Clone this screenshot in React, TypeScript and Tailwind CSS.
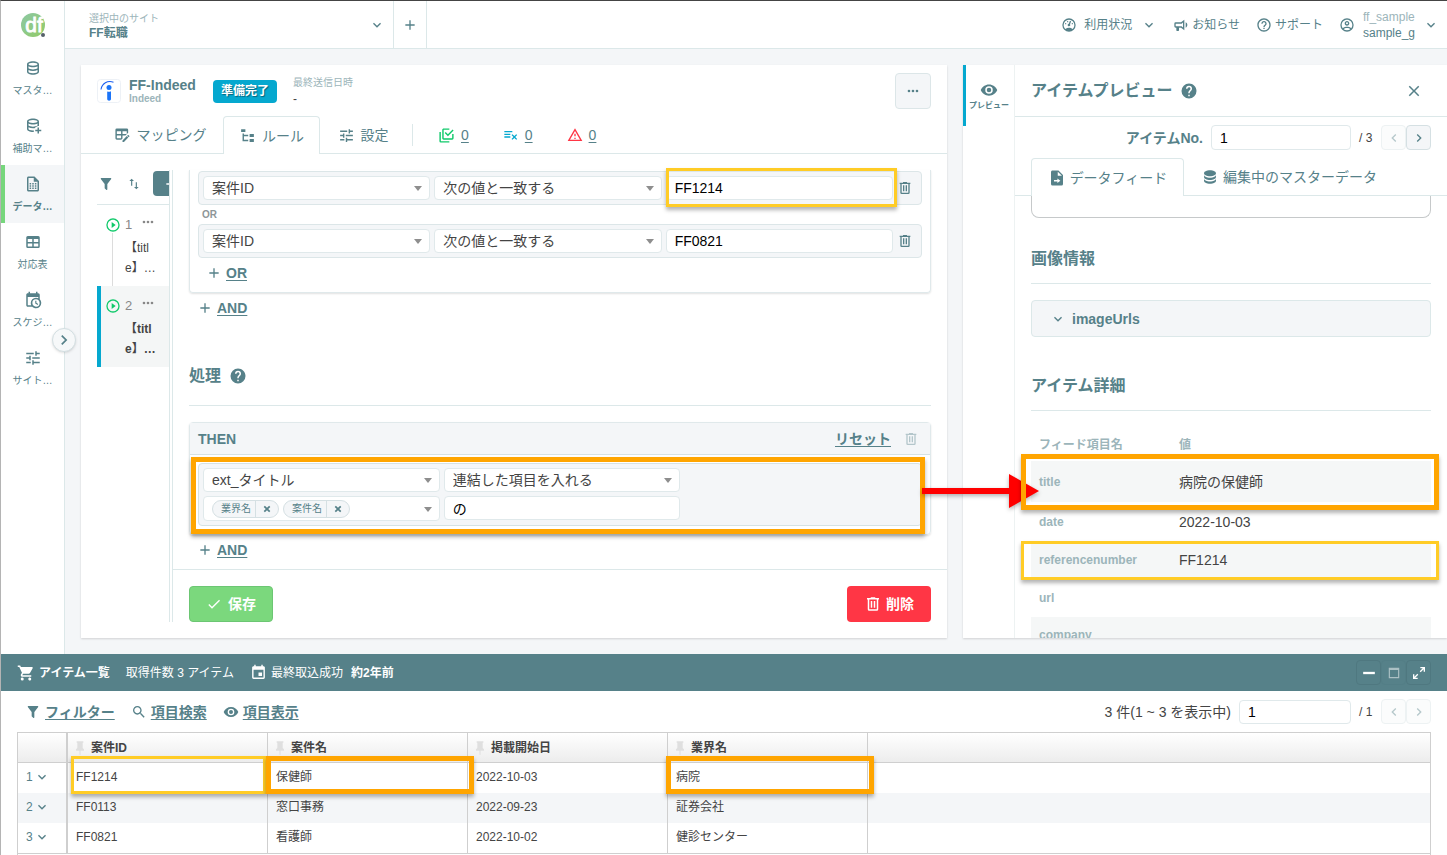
import { useState, type ReactNode } from 'react';

const paths = {
  database:
    'M12 3C7.58 3 4 4.79 4 7V17C4 19.21 7.59 21 12 21S20 19.21 20 17V7C20 4.79 16.42 3 12 3M18 17C18 17.5 15.87 19 12 19S6 17.5 6 17V14.77C7.61 15.55 9.72 16 12 16S16.39 15.55 18 14.77V17M18 12.45C16.7 13.4 14.42 14 12 14C9.58 14 7.3 13.4 6 12.45V9.64C7.47 10.47 9.61 11 12 11C14.39 11 16.53 10.47 18 9.64V12.45M12 9C8.13 9 6 7.5 6 7S8.13 5 12 5C15.87 5 18 6.5 18 7S15.87 9 12 9Z',
  databasePlus:
    'M12 2C7.58 2 4 3.79 4 6V16C4 18.21 7.59 20 12 20L13 19.97C13 19.3 13.1 18.6 13.3 17.94C12.9 18 12.5 18 12 18C8.13 18 6 16.5 6 16V13.77C7.61 14.55 9.72 15 12 15C12.7 15 13.4 14.95 14.1 14.87C14.9 13.9 15.9 13.1 17.1 12.6L18 12.3C18.6 12.1 19.3 12 20 12V6C20 3.79 16.42 2 12 2M18 11.45C16.7 12.4 14.42 13 12 13C9.58 13 7.3 12.4 6 11.45V8.64C7.47 9.47 9.61 10 12 10C14.39 10 16.53 9.47 18 8.64V11.45M12 8C8.13 8 6 6.5 6 6S8.13 4 12 4C15.87 4 18 5.5 18 6S15.87 8 12 8M18 14H20V17H23V19H20V22H18V19H15V17H18V14Z',
  fileTable:
    'M14 2H6C4.89 2 4 2.9 4 4V20C4 21.11 4.89 22 6 22H18C19.11 22 20 21.11 20 20V8L14 2M18 20H6V4H13V9H18V20M7.5 10.5H9.5V12.5H7.5ZM11 10.5H13V12.5H11ZM14.5 10.5H16.5V12.5H14.5ZM7.5 13.5H9.5V15.5H7.5ZM11 13.5H13V15.5H11ZM14.5 13.5H16.5V15.5H14.5ZM7.5 16.5H9.5V18.5H7.5ZM11 16.5H13V18.5H11ZM14.5 16.5H16.5V18.5H14.5Z',
  table:
    'M5,4H19A2,2 0 0,1 21,6V18A2,2 0 0,1 19,20H5A2,2 0 0,1 3,18V6A2,2 0 0,1 5,4M5,8V12H11V8H5M13,8V12H19V8H13M5,14V18H11V14H5M13,14V18H19V14H13Z',
  calendarClock:
    'M15 13H16.5V15.82L18.94 17.23L18.19 18.53L15 16.69V13M19 8H5V19H9.67C9.24 18.09 9 17.07 9 16A7 7 0 0 1 16 9C17.07 9 18.09 9.24 19 9.67V8M5 21C3.89 21 3 20.1 3 19V5C3 3.89 3.89 3 5 3H6V1H8V3H16V1H18V3H19A2 2 0 0 1 21 5V11.1C22.24 12.36 23 14.09 23 16A7 7 0 0 1 16 23C14.09 23 12.36 22.24 11.1 21H5M16 11.15A4.85 4.85 0 0 0 11.15 16C11.15 18.68 13.32 20.85 16 20.85A4.85 4.85 0 0 0 20.85 16C20.85 13.32 18.68 11.15 16 11.15Z',
  tune: 'M3 17v2h6v-2H3zM3 5v2h10V5H3zm10 16v-2h8v-2h-8v-2h-2v6h2zM7 9v2H3v2h4v2h2V9H7zm14 4v-2H11v2h10zm-6-4h2V7h4V5h-4V3h-2v6z',
  tableEdit:
    'M21.7,13.35L20.7,14.35L18.65,12.3L19.65,11.3C19.86,11.08 20.21,11.08 20.42,11.3L21.7,12.58C21.92,12.79 21.92,13.14 21.7,13.35M12,18.94L18.07,12.88L20.12,14.93L14.06,21H12V18.94M4,2H18A2,2 0 0,1 20,4V8.17L16.17,12H12V16.17L10.17,18H4A2,2 0 0,1 2,16V4A2,2 0 0,1 4,2M4,6V10H10V6H4M12,6V10H18V6H12M4,12V16H10V12H4Z',
  fileTree: 'M3,3H9V7H3V3M15,10H21V14H15V10M15,17H21V21H15V17M13,13H7V18H13V20H7L5,20V9H7V11H13V13Z',
  checks:
    'M20,16V10H22V16A2,2 0 0,1 20,18H8C6.89,18 6,17.1 6,16V4C6,2.89 6.89,2 8,2H16V4H8V16H20M10.91,7.08L14,10.17L20.59,3.58L22,5L14,13L9.5,8.5L10.91,7.08M16,20V22H4A2,2 0 0,1 2,20V7H4V20H16Z',
  listRemove:
    'M2,6V8H14V6H2M2,10V12H11V10H2M14.17,10.76L12.76,12.17L15.59,15L12.76,17.83L14.17,19.24L17,16.41L19.83,19.24L21.24,17.83L18.41,15L21.24,12.17L19.83,10.76L17,13.59L14.17,10.76M2,14V16H11V14H2Z',
  alert: 'M12,2L1,21H23M12,6L19.53,19H4.47M11,10V14H13V10M11,16V18H13V16',
  trash:
    'M9,3V4H4V6H5V19A2,2 0 0,0 7,21H17A2,2 0 0,0 19,19V6H20V4H15V3H9M7,6H17V19H7V6M9,8V17H11V8H9M13,8V17H15V8H13Z',
  filter:
    'M14,12V19.88C14.04,20.18 13.94,20.5 13.71,20.71C13.32,21.1 12.69,21.1 12.3,20.71L10.29,18.7C10.06,18.47 9.96,18.16 10,17.87V12H9.97L4.21,4.62C3.87,4.19 3.95,3.56 4.38,3.22C4.57,3.08 4.78,3 5,3V3H19V3C19.22,3 19.43,3.08 19.62,3.22C20.05,3.56 20.13,4.19 19.79,4.62L14.03,12H14Z',
  swap: 'M8,3L4,7H7V15H9V7H12M17,17V9H15V17H12L16,21L20,17H17Z',
  play: 'M12,20C7.59,20 4,16.41 4,12C4,7.59 7.59,4 12,4C16.41,4 20,7.59 20,12C20,16.41 16.41,20 12,20M12,2A10,10 0 0,0 2,12A10,10 0 0,0 12,22A10,10 0 0,0 22,12A10,10 0 0,0 12,2M10,16.5L16,12L10,7.5V16.5Z',
  help: 'M15.07,11.25L14.17,12.17C13.45,12.89 13,13.5 13,15H11V14.5C11,13.39 11.45,12.39 12.17,11.67L13.41,10.41C13.78,10.05 14,9.55 14,9C14,7.89 13.1,7 12,7A2,2 0 0,0 10,9H8A4,4 0 0,1 12,5A4,4 0 0,1 16,9C16,9.88 15.64,10.67 15.07,11.25M13,19H11V17H13M12,2A10,10 0 0,0 2,12A10,10 0 0,0 12,22A10,10 0 0,0 22,12C22,6.47 17.5,2 12,2Z',
  helpOutline:
    'M11 18h2v-2h-2v2zm1-16C6.48 2 2 6.48 2 12s4.48 10 10 10 10-4.48 10-10S17.52 2 12 2zm0 18c-4.41 0-8-3.59-8-8s3.59-8 8-8 8 3.59 8 8-3.59 8-8 8zm0-14c-2.21 0-4 1.79-4 4h2c0-1.1.9-2 2-2s2 .9 2 2c0 2-3 1.75-3 5h2c0-2.25 3-2.5 3-5 0-2.21-1.79-4-4-4z',
  eye: 'M12,9A3,3 0 0,0 9,12A3,3 0 0,0 12,15A3,3 0 0,0 15,12A3,3 0 0,0 12,9M12,17A5,5 0 0,1 7,12A5,5 0 0,1 12,7A5,5 0 0,1 17,12A5,5 0 0,1 12,17M12,4.5C7,4.5 2.73,7.61 1,12C2.73,16.39 7,19.5 12,19.5C17,19.5 21.27,16.39 23,12C21.27,7.61 17,4.5 12,4.5Z',
  account:
    'M12,2A10,10 0 0,0 2,12A10,10 0 0,0 12,22A10,10 0 0,0 22,12A10,10 0 0,0 12,2M7.07,18.28C7.5,17.38 10.12,16.5 12,16.5C13.88,16.5 16.5,17.38 16.93,18.28C15.57,19.36 13.86,20 12,20C10.14,20 8.43,19.36 7.07,18.28M18.36,16.83C16.93,15.09 13.46,14.5 12,14.5C10.54,14.5 7.07,15.09 5.64,16.83C4.62,15.5 4,13.82 4,12C4,7.59 7.59,4 12,4C16.41,4 20,7.59 20,12C20,13.82 19.38,15.5 18.36,16.83M12,6C10.06,6 8.5,7.56 8.5,9.5C8.5,11.44 10.06,13 12,13C13.94,13 15.5,11.44 15.5,9.5C15.5,7.56 13.94,6 12,6M12,11A1.5,1.5 0 0,1 10.5,9.5A1.5,1.5 0 0,1 12,8A1.5,1.5 0 0,1 13.5,9.5A1.5,1.5 0 0,1 12,11Z',
  gauge:
    'M12,2A10,10 0 0,0 2,12A10,10 0 0,0 12,22A10,10 0 0,0 22,12A10,10 0 0,0 12,2M12,4A8,8 0 0,1 20,12C20,14.4 19,16.5 17.3,18C15.9,16.7 14,16 12,16C10,16 8.2,16.7 6.7,18C5,16.5 4,14.4 4,12A8,8 0 0,1 12,4M14,5.89C13.62,5.9 13.26,6.15 13.1,6.54L11.81,9.77L11.71,10C11,10.13 10.41,10.6 10.14,11.26C9.73,12.29 10.23,13.45 11.26,13.86C12.29,14.27 13.45,13.77 13.86,12.74C14.12,12.08 14,11.32 13.57,10.76L13.67,10.5L14.96,7.29L14.97,7.26C15.17,6.75 14.92,6.17 14.41,5.96C14.28,5.91 14.15,5.89 14,5.89M10,6A1,1 0 0,0 9,7A1,1 0 0,0 10,8A1,1 0 0,0 11,7A1,1 0 0,0 10,6M7,9A1,1 0 0,0 6,10A1,1 0 0,0 7,11A1,1 0 0,0 8,10A1,1 0 0,0 7,9M17,9A1,1 0 0,0 16,10A1,1 0 0,0 17,11A1,1 0 0,0 18,10A1,1 0 0,0 17,9Z',
  bullhorn:
    'M12,8H4A2,2 0 0,0 2,10V14A2,2 0 0,0 4,16H5V20A1,1 0 0,0 6,21H8A1,1 0 0,0 9,20V16H12L17,20V4L12,8M15,15.6L13,14H4V10H13L15,8.4V15.6M21.5,12C21.5,13.71 20.54,15.26 19,16V8C20.53,8.75 21.5,10.3 21.5,12Z',
  fileArrow:
    'M6,2C4.89,2 4,2.89 4,4V20A2,2 0 0,0 6,22H18A2,2 0 0,0 20,20V8L14,2H6M13,3.5L18.5,9H13V3.5M8,14.5H12.5V12.5L16.5,15.5L12.5,18.5V16.5H8Z',
  databaseSolid:
    'M12,3C7.58,3 4,4.79 4,7C4,9.21 7.58,11 12,11C16.42,11 20,9.21 20,7C20,4.79 16.42,3 12,3M4,9V12C4,14.21 7.58,16 12,16C16.42,16 20,14.21 20,12V9C20,11.21 16.42,13 12,13C7.58,13 4,11.21 4,9M4,14V17C4,19.21 7.58,21 12,21C16.42,21 20,19.21 20,17V14C20,16.21 16.42,18 12,18C7.58,18 4,16.21 4,14Z',
  cart: 'M17,18A2,2 0 0,1 19,20A2,2 0 0,1 17,22C15.89,22 15,21.1 15,20C15,18.89 15.89,18 17,18M1,2H4.27L5.21,4H20A1,1 0 0,1 21,5C21,5.17 20.95,5.34 20.88,5.5L17.3,11.97C16.96,12.58 16.3,13 15.55,13H8.1L7.2,14.63L7.17,14.75A0.25,0.25 0 0,0 7.42,15H19V17H7C5.89,17 5,16.1 5,15C5,14.65 5.09,14.32 5.24,14.04L6.6,11.59L3,4H1V2M7,18A2,2 0 0,1 9,20A2,2 0 0,1 7,22C5.89,22 5,21.1 5,20C5,18.89 5.89,18 7,18Z',
  calendar:
    'M19,19H5V8H19M16,1V3H8V1H6V3H5C3.89,3 3,3.89 3,5V19A2,2 0 0,0 5,21H19A2,2 0 0,0 21,19V5C21,3.89 20.1,3 19,3H18V1M17,12H12V17H17V12Z',
  search:
    'M15.5 14h-.79l-.28-.27C15.41 12.59 16 11.11 16 9.5 16 5.91 13.09 3 9.5 3S3 5.91 3 9.5 5.91 16 9.5 16c1.61 0 3.09-.59 4.23-1.57l.27.28v.79l5 4.99L20.49 19l-4.99-5zm-6 0C7.01 14 5 11.99 5 9.5S7.01 5 9.5 5 14 7.01 14 9.5 11.99 14 9.5 14z',
  pin: 'M16,12V4H17V2H7V4H8V12L6,14V16H11.2V22H12.8V16H18V14L16,12Z',
  expand:
    'M10,21V19H6.41L10.91,14.5L9.5,13.09L5,17.59V14H3V21H10M14.5,10.91L19,6.41V10H21V3H14V5H17.59L13.09,9.5L14.5,10.91Z',
  maximize: 'M3,3H21V21H3V3M5,7V19H19V7H5Z',
  minimize: 'M2,10H22V14H2Z',
  chevronDown: 'M7.41,8.58L12,13.17L16.59,8.58L18,10L12,16L6,10L7.41,8.58Z',
  chevronRight: 'M8.59,16.58L13.17,12L8.59,7.41L10,6L16,12L10,18L8.59,16.58Z',
  chevronLeft: 'M15.41,16.58L10.83,12L15.41,7.41L14,6L8,12L14,18L15.41,16.58Z',
  plus: 'M19,13H13V19H11V13H5V11H11V5H13V11H19V13Z',
  check: 'M21,7L9,19L3.5,13.5L4.91,12.09L9,16.17L19.59,5.59L21,7Z',
  close: 'M19,6.41L17.59,5L12,10.59L6.41,5L5,6.41L10.59,12L5,17.59L6.41,19L12,13.41L17.59,19L19,17.59L13.41,12L19,6.41Z',
  closeBold:
    'M20 6.91L17.09 4L12 9.09L6.91 4L4 6.91L9.09 12L4 17.09L6.91 20L12 14.91L17.09 20L20 17.09L14.91 12L20 6.91Z',
  dots: 'M16,12A2,2 0 0,1 18,10A2,2 0 0,1 20,12A2,2 0 0,1 18,14A2,2 0 0,1 16,12M10,12A2,2 0 0,1 12,10A2,2 0 0,1 14,12A2,2 0 0,1 12,14A2,2 0 0,1 10,12M4,12A2,2 0 0,1 6,10A2,2 0 0,1 8,12A2,2 0 0,1 6,14A2,2 0 0,1 4,12Z',
  caret: 'M4,8H20L12,18Z',
};

type IconName = keyof typeof paths;

function Icon({ name, className = 'size-4' }: { name: IconName; className?: string }) {
  return (
    <svg viewBox="0 0 24 24" fill="currentColor" fillRule="evenodd" aria-hidden="true" className={`shrink-0 ${className}`}>
      <path d={paths[name]} />
    </svg>
  );
}

/* Callout frame laid over the element it is placed in. */
function Callout({ className }: { className: string }) {
  return (
    <div
      className={`pointer-events-none absolute z-10 shadow-[0_3px_4px_rgba(0,0,0,0.3)] ${className}`}
    />
  );
}

function Select({ label, value }: { label: string; value: string }) {
  return (
    <div className="relative min-w-0 flex-1">
      <select
        aria-label={label}
        className="block h-6 w-full appearance-none rounded border border-[#e0e9eb] bg-white pl-2 pr-7 text-sm leading-5 text-[#444]"
      >
        <option>{value}</option>
      </select>
      <Icon name="caret" className="pointer-events-none absolute right-1.5 top-1.5 size-3 text-[#8e8e8e]" />
    </div>
  );
}

function TextInput({ label, value, className = 'w-full' }: { label: string; value: string; className?: string }) {
  return (
    <input
      aria-label={label}
      defaultValue={value}
      className={`block h-6 rounded border border-[#e0e9eb] bg-white px-2 text-sm leading-5 text-black ${className}`}
    />
  );
}

const navItems: { icon: IconName; label: string; active?: boolean }[] = [
  { icon: 'database', label: 'マスタ…' },
  { icon: 'databasePlus', label: '補助マ…' },
  { icon: 'fileTable', label: 'データ…', active: true },
  { icon: 'table', label: '対応表' },
  { icon: 'calendarClock', label: 'スケジ…' },
  { icon: 'tune', label: 'サイト…' },
];

function Sidebar() {
  return (
    <aside className="relative w-16 shrink-0 border-r border-[#dce8e9] bg-white">
      <div className="flex h-12 items-center justify-center">
        <svg viewBox="0 0 26 26" className="size-[26px]" role="img" aria-label="df">
          <defs>
            <linearGradient id="logo" x1="0" y1="0" x2="1" y2="1">
              <stop offset="0" stopColor="#8cc8a4" />
              <stop offset="1" stopColor="#92cb66" />
            </linearGradient>
          </defs>
          <circle cx="13" cy="13" r="12" fill="url(#logo)" />
          <text
            x="14"
            y="20"
            textAnchor="middle"
            fontFamily="Liberation Sans, sans-serif"
            fontSize="21"
            fill="#fff"
            stroke="#fff"
            strokeWidth="0.8"
          >
            df
          </text>
          <circle cx="23" cy="23" r="2" fill="#55606a" />
        </svg>
      </div>
      <nav>
        {navItems.map((item) => (
          <a
            key={item.label}
            href="#"
            className={`flex h-[58px] flex-col items-center gap-1 border-l-4 pr-1 pt-2.5 text-[10px] leading-5 ${
              item.active ? 'border-[#76d67c] bg-[#f4f6f8] font-bold' : 'border-transparent'
            }`}
          >
            <Icon name={item.icon} className="size-[18px]" />
            {item.label}
          </a>
        ))}
      </nav>
      <button
        aria-label="メニューを開く"
        className="absolute -right-3 top-[327px] z-10 flex size-6 items-center justify-center rounded-full border border-[#d3dfe2] bg-[#f6f8f9] shadow-sm"
      >
        <Icon name="chevronRight" className="size-5" />
      </button>
    </aside>
  );
}

function Header() {
  return (
    <header className="flex h-12 shrink-0 items-stretch justify-between border-b border-[#dce8e9] bg-white">
      <div className="flex">
        <button className="flex w-[329px] items-center justify-between border-r border-[#dce8e9] pl-6 pr-2 text-left">
          <span className="flex flex-col pt-0.5">
            <span className="text-[10px] leading-[14px] text-[#9cb5ba]">選択中のサイト</span>
            <span className="text-xs leading-[14px] font-bold">FF転職</span>
          </span>
          <Icon name="chevronDown" />
        </button>
        <button aria-label="サイトを追加" className="flex w-[33px] items-center justify-center border-r border-[#dce8e9]">
          <Icon name="plus" />
        </button>
      </div>
      <div className="flex items-center pr-2 text-xs">
        <button className="flex items-center gap-[7px]">
          <Icon name="gauge" />
          利用状況
          <Icon name="chevronDown" className="ml-0.5 size-4" />
        </button>
        <button className="ml-4 flex items-center gap-[3px]">
          <Icon name="bullhorn" />
          お知らせ
        </button>
        <button className="ml-4 flex items-center gap-[3px]">
          <Icon name="helpOutline" />
          サポート
        </button>
        <button className="ml-4 flex items-center gap-2 text-left">
          <Icon name="account" />
          <span className="flex flex-col leading-4">
            <span className="text-[#9cb5ba]">ff_sample</span>
            <span>sample_g</span>
          </span>
          <Icon name="chevronDown" className="size-4" />
        </button>
      </div>
    </header>
  );
}

function IndeedMark() {
  return (
    <svg viewBox="0 0 24 24" className="size-6 shrink-0" role="img" aria-label="Indeed">
      <rect x="0.5" y="0.5" width="23" height="23" rx="3" fill="#fff" stroke="#edf1f6" />
      <circle cx="12" cy="8.6" r="2.5" fill="#1b74f8" />
      <path d="M10.200 12.400c1.300.6 2.500.6 3.800-.2V20c0 2.200-3.800 2.200-3.800 0z" fill="#1b74f8" />
      <path d="M4 10.500C5 4.200 10.500 1.200 16.500 3.200" fill="none" stroke="#1b5ff0" strokeWidth="1.100" />
    </svg>
  );
}

function FeedHeader() {
  const tab = 'flex h-[38px] items-center justify-center gap-1.5 text-sm';
  return (
    <div className="border-b border-[#dce8e9]">
      <div className="flex items-center px-4 pt-2">
        <IndeedMark />
        <div className="ml-2 flex flex-col">
          <span className="text-sm leading-4 font-bold">FF-Indeed</span>
          <span className="text-[10px] leading-3 font-bold text-[#9cb5ba]">Indeed</span>
        </div>
        <span className="ml-[17px] flex h-[23px] items-center rounded-sm bg-[#05a8cf] px-2 text-xs font-bold text-white [text-shadow:1px_1px_1px_rgba(0,0,0,0.4)]">
          準備完了
        </span>
        <div className="ml-4 flex flex-col">
          <span className="text-[10px] leading-4 text-[#9cb5ba]">最終送信日時</span>
          <span className="text-xs leading-4 text-[#444]">-</span>
        </div>
        <button
          aria-label="その他"
          className="ml-auto flex size-9 items-center justify-center rounded border border-[#dce6e8] bg-[#f4f6f8]"
        >
          <Icon name="dots" />
        </button>
      </div>
      <div role="tablist" className="mt-[7px] -mb-px flex items-center pl-4">
        <button role="tab" aria-selected="false" className={`${tab} w-[126px]`}>
          <Icon name="tableEdit" className="size-[17px]" />
          マッピング
        </button>
        <button
          role="tab"
          aria-selected="true"
          className={`${tab} w-[97px] rounded-t border border-b-0 border-[#dce8e9] bg-white`}
        >
          <Icon name="fileTree" className="size-[17px]" />
          ルール
        </button>
        <button role="tab" aria-selected="false" className={`${tab} w-[86px]`}>
          <Icon name="tune" className="size-[17px]" />
          設定
        </button>
        <div className="ml-1.5 flex h-[22px] items-center gap-[34px] border-l border-[#dce8e9] pl-[25px] text-sm">
          <a href="#" className="flex items-center gap-1.5">
            <Icon name="checks" className="size-[17px] text-[#0fc96a]" />
            <span className="underline underline-offset-2">0</span>
          </a>
          <a href="#" className="flex items-center gap-1.5">
            <Icon name="listRemove" className="size-[16px] text-[#05a8cf]" />
            <span className="underline underline-offset-2">0</span>
          </a>
          <a href="#" className="flex items-center gap-1.5">
            <Icon name="alert" className="size-4 text-[#ff3645]" />
            <span className="underline underline-offset-2">0</span>
          </a>
        </div>
      </div>
    </div>
  );
}

function RuleList() {
  return (
    <div className="w-[73px] shrink-0 overflow-hidden border-r border-[#dce8e9]">
      <div className="flex h-[35px] items-start border-b border-[#dce8e9] pt-px">
        <button aria-label="絞り込み" className="flex h-[25px] w-[18px] shrink-0 items-center justify-center">
          <Icon name="filter" />
        </button>
        <button aria-label="並べ替え" className="ml-3 flex h-[25px] w-[14px] shrink-0 items-center justify-center">
          <Icon name="swap" className="size-3.5" />
        </button>
        <button
          aria-label="追加"
          className="ml-3 flex h-[25px] w-9 shrink-0 items-center justify-center rounded-l bg-[#568189] text-white"
        >
          <Icon name="plus" className="size-4" />
        </button>
      </div>
      {['1', '2'].map((n) => {
        const active = n === '2';
        return (
          <a
            key={n}
            href="#"
            className={`relative flex h-[81px] border-l-4 pl-1 pt-[11px] text-xs text-[#444] ${
              active ? 'border-[#05a8cf] bg-[#f4f6f6]' : 'border-transparent'
            }`}
          >
            {!active && <span className="absolute left-[11px] top-7 h-16 w-px bg-[#dcdcdc]" />}
            <span className="relative z-10 pt-px text-[#0fc96a]">
              <Icon name="play" className="size-4" />
            </span>
            <span className="ml-1">
              <span className="flex items-start justify-between text-[#888]">
                <span className="text-[13px] leading-[18px]">{n}</span>
                <Icon name="dots" className="-mt-0.5 ml-2 size-4" />
              </span>
              <span className={`block pt-1 leading-5 whitespace-nowrap ${active ? 'font-bold' : ''}`}>
                【titl
                <br />
                e】…
              </span>
            </span>
          </a>
        );
      })}
    </div>
  );
}

function Condition({ value, highlighted }: { value: string; highlighted?: boolean }) {
  return (
    <div className="flex items-center rounded border border-[#dce6e8] bg-[#f4f6f8] p-1">
      <div className="flex flex-1 gap-1">
        <Select label="項目" value="案件ID" />
        <Select label="条件" value="次の値と一致する" />
        <div className="relative flex-1">
          <TextInput label="値" value={value} />
          {highlighted && <Callout className="left-0 -right-1 -top-2 -bottom-[7px] border-3 border-[#ffcc26]" />}
        </div>
      </div>
      <button aria-label="削除" className="flex w-6 justify-center">
        <Icon name="trash" />
      </button>
    </div>
  );
}

function AddLink({ children, className = '' }: { children: ReactNode; className?: string }) {
  return (
    <a href="#" className={`flex h-[30px] w-fit items-center gap-1 text-sm font-bold ${className}`}>
      <Icon name="plus" className="size-4" />
      <span className="underline underline-offset-2">{children}</span>
    </a>
  );
}

function Tag({ children }: { children: string }) {
  return (
    <span className="flex h-[18px] items-stretch rounded-full border border-[#d5e0e3] bg-[#f4f6f8] text-[10px] leading-4">
      <span className="pl-2 pr-1">{children}</span>
      <button aria-label={`${children}を外す`} className="flex w-[23px] items-center justify-center border-l border-[#d5e0e3]">
        <Icon name="closeBold" className="size-2.5" />
      </button>
    </span>
  );
}

function Arrow() {
  return (
    <svg
      viewBox="0 0 117 40"
      aria-hidden="true"
      className="pointer-events-none absolute left-full top-4 z-20 -ml-0.5 h-10 w-[117px] drop-shadow-[0_2px_2px_rgba(0,0,0,0.3)]"
    >
      <path d="M0 17H87V3L117 20L87 37V23H0Z" fill="#f00" />
    </svg>
  );
}

function RuleEditor() {
  return (
    <div className="ml-0.5 flex min-w-0 flex-1 flex-col border-l border-[#dce8e9]">
      <div className="px-4">
        <div className="rounded-b border border-t-0 border-[#e0e9eb] px-2 pb-1 pt-px shadow-[0_1px_2px_rgba(0,0,0,0.12)]">
          <Condition value="FF1214" highlighted />
          <div className="pl-1 text-[10px] leading-[19px] font-bold text-[#8e9698]">OR</div>
          <Condition value="FF0821" />
          <AddLink className="pl-2">OR</AddLink>
        </div>
        <AddLink className="pl-2">AND</AddLink>
        <h2 className="mt-10 flex items-center gap-2 border-b border-[#dce8e9] pb-[17px] text-base leading-[25px] font-bold">
          処理
          <Icon name="help" className="size-[18px]" />
        </h2>
        <div className="mt-4 rounded border border-[#e0e9eb] shadow-[0_1px_2px_rgba(0,0,0,0.12)]">
          <div className="flex h-8 items-center border-b border-[#d5e2e4] bg-[#f4f6f8] pl-2 pr-[11px] text-sm font-bold">
            THEN
            <button className="ml-auto underline underline-offset-2">リセット</button>
            <button aria-label="削除" className="ml-3 opacity-40">
              <Icon name="trash" />
            </button>
          </div>
          <div className="relative p-2">
            <div className="grid grid-cols-3 gap-1 rounded border border-[#d5e2e4] bg-[#f4f6f8] py-1 pl-1">
              <Select label="出力項目" value="ext_タイトル" />
              <Select label="処理内容" value="連結した項目を入れる" />
              <span />
              <div className="flex h-[25px] items-center gap-1 rounded border border-[#e0e9eb] bg-white pl-2 pr-[5px]">
                <Tag>業界名</Tag>
                <Tag>案件名</Tag>
                <Icon name="caret" className="ml-auto size-3 text-[#8e8e8e]" />
              </div>
              <TextInput label="連結文字" value="の" />
            </div>
            <Callout className="left-px right-[5px] top-0.5 bottom-0 border-5 border-[#ffa500]" />
            <div className="absolute right-1.5 top-0">
              <Arrow />
            </div>
          </div>
        </div>
        <AddLink className="pl-2">AND</AddLink>
      </div>
      <div className="mt-auto flex justify-between border-t border-[#dce8e9] px-4 pt-4 text-sm font-bold text-white [text-shadow:1px_1px_1px_rgba(0,0,0,0.35)]">
        <button className="flex h-9 w-[84px] items-center justify-center gap-1.5 rounded border border-[#6cc673] bg-[#7bd87d]">
          <Icon name="check" />
          保存
        </button>
        <button className="flex h-9 w-[84px] items-center justify-center gap-1 rounded bg-[#ff3645]">
          <Icon name="trash" className="size-[18px]" />
          削除
        </button>
      </div>
    </div>
  );
}

const pagerButton = 'flex size-[25px] items-center justify-center rounded border';

function Pager({ nextEnabled }: { nextEnabled?: boolean }) {
  return (
    <div className="flex">
      <button aria-label="前へ" disabled className={`${pagerButton} border-[#edf2f3] bg-[#fbfcfc] text-[#b5c8cb]`}>
        <Icon name="chevronLeft" />
      </button>
      <button
        aria-label="次へ"
        disabled={!nextEnabled}
        className={`${pagerButton} ${
          nextEnabled ? 'border-[#d5e0e3] bg-[#f4f6f8]' : 'border-[#edf2f3] bg-[#fbfcfc] text-[#b5c8cb]'
        }`}
      >
        <Icon name="chevronRight" />
      </button>
    </div>
  );
}

const details: { name: string; value: string; frame?: string; height: string }[] = [
  {
    name: 'title',
    value: '病院の保健師',
    frame: '-left-2.5 -right-2 -top-[7px] -bottom-2 border-5 border-[#ffa500]',
    height: 'h-[41px]',
  },
  { name: 'date', value: '2022-10-03', height: 'h-[39px]' },
  {
    name: 'referencenumber',
    value: 'FF1214',
    frame: '-left-2.5 -right-2 top-0 -bottom-px border-3 border-[#ffcc26]',
    height: 'h-[38px]',
  },
  { name: 'url', value: '', height: 'h-[38px]' },
  { name: 'company', value: '', height: 'h-[36px]' },
];

function Preview() {
  return (
    <section className="flex min-w-0 flex-1 overflow-hidden bg-white shadow-[0_1px_2px_rgba(0,0,0,0.15)]">
      <div className="w-[52px] shrink-0 border-r border-[#edf2f2]">
        <button className="flex h-[61px] w-full flex-col items-center justify-center border-l-3 border-[#05a8cf] pt-0.5 pr-0.5 text-[8px] leading-[14px] font-bold">
          <Icon name="eye" className="size-[18px]" />
          プレビュー
        </button>
      </div>
      <div className="min-w-0 flex-1">
        <div className="flex h-[52px] items-center gap-2 border-b border-[#dce8e9] px-4">
          <h2 className="text-base font-bold">アイテムプレビュー</h2>
          <Icon name="help" className="size-[18px]" />
          <button aria-label="閉じる" className="ml-auto mr-2">
            <Icon name="close" className="size-[18px]" />
          </button>
        </div>
        <div className="flex h-[41px] items-center justify-end px-4">
          <label htmlFor="item-no" className="text-sm font-bold">
            アイテムNo.
          </label>
          <input
            id="item-no"
            defaultValue="1"
            className="ml-2 h-[25px] w-[140px] rounded border border-[#e0e9eb] px-2 text-sm text-black"
          />
          <span className="mx-2 w-3.5 text-xs whitespace-nowrap text-[#444]">/ 3</span>
          <Pager nextEnabled />
        </div>
        <div role="tablist" className="flex border-b border-[#dce8e9] pl-4 text-sm">
          <button
            role="tab"
            aria-selected="true"
            className="-mb-px flex h-[38px] w-[153px] items-center justify-center gap-1 rounded-t border border-b-0 border-[#dce8e9] bg-white"
          >
            <Icon name="fileArrow" className="size-[18px]" />
            データフィード
          </button>
          <button role="tab" aria-selected="false" className="flex h-[37px] items-center gap-1 pl-[17px]">
            <Icon name="databaseSolid" className="size-[18px]" />
            編集中のマスターデータ
          </button>
        </div>
        <div className="px-4">
          <div className="h-[22px] rounded-b-lg border border-t-0 border-[#c6c9ca]" />
          <h3 className="mt-[29px] border-b border-[#dce8e9] pb-3 text-base leading-6 font-bold">画像情報</h3>
          <button className="mt-4 flex h-[37px] w-full items-center gap-1 rounded border border-[#dce8e9] bg-[#f4f6f8] px-4 text-sm font-bold">
            <Icon name="chevronDown" className="mx-0.5 size-4" />
            imageUrls
          </button>
          <h3 className="mt-[37px] border-b border-[#dce8e9] pb-3 text-base leading-6 font-bold">アイテム詳細</h3>
          <table className="mt-[18px] w-full table-fixed text-left">
            <thead>
              <tr className="h-8 text-xs text-[#9cb5ba]">
                <th className="w-[140px] pl-2">フィード項目名</th>
                <th className="pl-2">値</th>
              </tr>
            </thead>
            <tbody>
              {details.map((row) => (
                <tr key={row.name} className={`relative odd:bg-[#f5f7f7] ${row.height}`}>
                  <th className="pl-2 text-xs text-[#9cb5ba]">
                    {row.name}
                    {row.frame && <Callout className={row.frame} />}
                  </th>
                  <td className="pl-2 text-sm text-[#444]">{row.value}</td>
                </tr>
              ))}
            </tbody>
          </table>
        </div>
      </div>
    </section>
  );
}

const columns = ['案件ID', '案件名', '掲載開始日', '業界名'];
const items = [
  ['FF1214', '保健師', '2022-10-03', '病院'],
  ['FF0113', '窓口事務', '2022-09-23', '証券会社'],
  ['FF0821', '看護師', '2022-10-02', '健診センター'],
];
const itemFrames: (string | undefined)[] = [
  'left-[3px] right-px -top-[7px] -bottom-px border-3 border-[#ffcc26]',
  '-left-0.5 -right-[7px] -top-[7px] -bottom-px border-5 border-[#ffa500]',
  undefined,
  '-left-0.5 -right-[7px] -top-[7px] -bottom-px border-5 border-[#ffa500]',
];

function ItemList() {
  const [page, setPage] = useState('1');
  const windowButton = 'flex size-[25px] items-center justify-center rounded border';
  const tool = 'flex items-center gap-1 text-sm font-bold';
  return (
    <section className="shrink-0 bg-white">
      <div className="flex h-[37px] items-center bg-[#568189] px-4 text-xs text-white">
        <Icon name="cart" className="mr-1 size-[18px]" />
        <h2 className="font-bold">アイテム一覧</h2>
        <span className="ml-4">取得件数 3 アイテム</span>
        <Icon name="calendar" className="ml-4 mr-1 size-[17px]" />
        最終取込成功
        <span className="ml-2 font-bold">約2年前</span>
        <div className="ml-auto flex">
          <button aria-label="最小化" className={`${windowButton} border-[#4f7880]`}>
            <Icon name="minimize" className="size-3.5" />
          </button>
          <button aria-label="元に戻す" disabled className={`${windowButton} border-[#537e86] text-white/50`}>
            <Icon name="maximize" className="size-3.5" />
          </button>
          <button aria-label="最大化" className={`${windowButton} border-[#4f7880]`}>
            <Icon name="expand" className="size-4" />
          </button>
        </div>
      </div>
      <div className="flex h-[41px] items-center px-4">
        <div className="flex gap-4 pl-2">
          <a href="#" className={tool}>
            <Icon name="filter" />
            <span className="underline underline-offset-2">フィルター</span>
          </a>
          <a href="#" className={tool}>
            <Icon name="search" />
            <span className="underline underline-offset-2">項目検索</span>
          </a>
          <a href="#" className={tool}>
            <Icon name="eye" />
            <span className="underline underline-offset-2">項目表示</span>
          </a>
        </div>
        <span className="ml-auto text-sm text-[#444]">3 件(1 ~ 3 を表示中)</span>
        <input
          aria-label="ページ"
          value={page}
          onChange={(e) => setPage(e.target.value)}
          className="ml-2 h-6 w-28 rounded border border-[#e0e9eb] px-2 text-sm text-black"
        />
        <span className="mx-2 w-3.5 text-xs whitespace-nowrap text-[#444]">/ 1</span>
        <Pager />
      </div>
      <div className="px-4">
        <table className="w-full table-fixed border-separate border-spacing-0 border border-[#cfcfcf] text-left text-xs text-[#444]">
          <thead>
            <tr className="h-[30px] bg-linear-to-b from-white to-[#ececec]">
              <th className="w-[50px] border-r-2 border-b border-[#cfcfcf]" />
              {columns.map((c) => (
                <th key={c} className="w-[200px] border-r border-b border-[#cfcfcf] pl-1">
                  <span className="flex items-center gap-[3px]">
                    <Icon name="pin" className="size-4 text-[#dfdfdf]" />
                    {c}
                  </span>
                </th>
              ))}
              <th className="border-b border-[#cfcfcf]" />
            </tr>
          </thead>
          <tbody>
            {items.map((row, i) => (
              <tr key={row[0]} className="h-[30px] even:bg-[#f4f6f8]">
                <th className="border-r-2 border-[#cfcfcf] pb-0.5 pl-2 font-normal text-[#568189]">
                  <span className="flex items-center gap-px">
                    {i + 1}
                    <Icon name="chevronDown" className="size-4" />
                  </span>
                </th>
                {row.map((cell, j) => (
                  <td key={columns[j]} className="relative border-r border-[#cfcfcf] pb-[3px] pl-2">
                    {cell}
                    {i === 0 && itemFrames[j] && <Callout className={itemFrames[j]} />}
                  </td>
                ))}
                <td />
              </tr>
            ))}
          </tbody>
        </table>
        <div className="h-px border-x border-[#cfcfcf]" />
      </div>
    </section>
  );
}

export default function App() {
  return (
    <div className="flex h-screen flex-col overflow-hidden border-l border-t border-l-[#b4b4b4] border-t-[#444] bg-[#f4f6f8] font-['Liberation_Sans','Noto_Sans_CJK_JP',sans-serif] text-[#568189]">
      <div className="flex min-h-0 flex-1">
        <Sidebar />
        <div className="flex min-w-0 flex-1 flex-col">
          <Header />
          <main className="flex min-h-0 flex-1 gap-4 py-4 pl-4">
            <section className="relative z-10 flex w-[866px] min-w-0 flex-col bg-white shadow-[0_1px_2px_rgba(0,0,0,0.15)]">
              <FeedHeader />
              <div className="flex min-h-0 flex-1 py-4 pl-4">
                <RuleList />
                <RuleEditor />
              </div>
            </section>
            <Preview />
          </main>
        </div>
      </div>
      <ItemList />
    </div>
  );
}
